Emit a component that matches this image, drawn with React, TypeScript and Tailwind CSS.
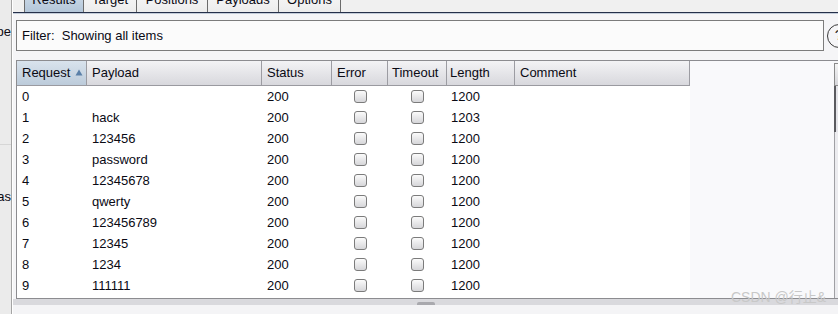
import React from 'react';

const tabs = [
  { name: 'Results', w: 60, active: true },
  { name: 'Target', w: 53 },
  { name: 'Positions', w: 71 },
  { name: 'Payloads', w: 71 },
  { name: 'Options', w: 62 },
];

const cols = [
  { name: 'Request', w: 70, pl: 5, sorted: true },
  { name: 'Payload', w: 175, pl: 5 },
  { name: 'Status', w: 70, pl: 5 },
  { name: 'Error', w: 56, pl: 5 },
  { name: 'Timeout', w: 59, pl: 4 },
  { name: 'Length', w: 68, pl: 3 },
  { name: 'Comment', w: 175, pl: 5 },
];

const rows = [
  ['0', '', '200', '1200'],
  ['1', 'hack', '200', '1203'],
  ['2', '123456', '200', '1200'],
  ['3', 'password', '200', '1200'],
  ['4', '12345678', '200', '1200'],
  ['5', 'qwerty', '200', '1200'],
  ['6', '123456789', '200', '1200'],
  ['7', '12345', '200', '1200'],
  ['8', '1234', '200', '1200'],
  ['9', '111111', '200', '1200'],
];

function Checkbox() {
  return (
    <span className="block w-[13px] h-[13px] rounded-[3px] border border-[#7b7b7b] bg-linear-to-b from-[#fbfbfb] to-[#d6d6d9]" />
  );
}

export default function App() {
  return (
    <div className="relative w-[838px] h-[314px] overflow-hidden flex bg-[#f5f5f7] text-[13px] text-[#0a0a14] font-['Liberation_Sans',Arial,sans-serif]">
      {/* left strip from the neighbouring panel */}
      <div className="w-[12px] shrink-0 flex flex-col bg-[#ebebeb] border-r border-[#a4a4a4] overflow-hidden">
        <div className="h-[24px]" />
        <div className="h-[15px] leading-[15px] flex justify-end whitespace-nowrap">pe</div>
        <div className="h-[106px] border-b border-[#d6d6d6]" />
        <div className="h-[44px]" />
        <div className="h-[15px] leading-[15px] flex justify-end whitespace-nowrap">as</div>
      </div>

      <div className="flex-1 min-w-0 flex flex-col border-l border-white overflow-hidden">
        {/* tabs, cut off at the top */}
        <div className="h-[12px] overflow-hidden bg-[#f0f0f0]">
          <div className="flex ml-[11px] -mt-[12px] h-[24px]">
            {tabs.map((t, i) => (
              <div
                key={t.name}
                style={{ width: t.w }}
                className={`h-[24px] leading-[24px] text-center border-r border-[#6b6b6b] ${i === 0 ? 'border-l' : ''} ${
                  t.active ? 'bg-linear-to-b from-[#d6e1ec] to-[#b3c6d9]' : 'bg-linear-to-b from-[#fafafa] to-[#ececec]'
                }`}
              >
                {t.name}
              </div>
            ))}
          </div>
        </div>
        <div className="h-[1px] bg-[#25304a]" />
        <div className="h-[1px] bg-[#c3ccd9]" />

        {/* filter */}
        <div className="flex items-center mt-[6px] ml-[3px]">
          <div className="w-[808px] h-[31px] shrink-0 border border-[#7c7c7c] bg-[#fbfbfb] flex items-center pl-[5px]">
            Filter:&nbsp; Showing all items
          </div>
          <div className="ml-[3px] w-[11px] h-[24px] shrink-0 overflow-hidden">
            <div className="w-[24px] h-[24px] rounded-full border-[1.5px] border-[#3a3a3a] flex items-center justify-center text-[15px] text-[#333]">
              ?
            </div>
          </div>
        </div>

        {/* results table */}
        <div className="flex mt-[9px] ml-[3px]">
          <div className="w-[818px] h-[239px] shrink-0 border-t border-l border-b border-[#8c8c90] bg-[#f9f9fb] flex flex-col">
            <div className="flex h-[25px] w-[673px] border-b border-[#9a9aa0]">
              {cols.map((c) => (
                <div
                  key={c.name}
                  style={{ width: c.w, paddingLeft: c.pl }}
                  className={`h-[24px] flex items-center whitespace-nowrap overflow-hidden border-r border-[#9c9ca2] ${
                    c.sorted ? 'bg-linear-to-b from-[#d9e3ed] to-[#bccbda]' : 'bg-linear-to-b from-[#f3f3f5] to-[#d8d8dd]'
                  }`}
                >
                  <span>{c.name}</span>
                  {c.sorted && (
                    <svg width="8" height="7" viewBox="0 0 8 7" className="ml-[5px] mb-[1px]">
                      <path d="M4 0.5 L7.5 6.5 L0.5 6.5 Z" fill="#5b80a8" />
                    </svg>
                  )}
                </div>
              ))}
            </div>
            <div className="w-[673px] bg-white">
              {rows.map((r) => (
                <div key={r[0]} className="flex h-[21px] items-center">
                  <div style={{ width: 70 }} className="pl-[5px]">{r[0]}</div>
                  <div style={{ width: 175 }} className="pl-[5px]">{r[1]}</div>
                  <div style={{ width: 70 }} className="pl-[5px]">{r[2]}</div>
                  <div style={{ width: 56 }} className="flex justify-center"><Checkbox /></div>
                  <div style={{ width: 59 }} className="flex justify-center"><Checkbox /></div>
                  <div style={{ width: 68 }} className="pl-[4px]">{r[3]}</div>
                  <div style={{ width: 175 }} />
                </div>
              ))}
            </div>
            <div className="w-[673px] flex-1 bg-white" />
          </div>
          {/* vertical scrollbar edge */}
          <div className="w-[6px] h-[239px] shrink-0 border-t border-b border-[#8c8c90] flex flex-col">
            <div className="h-[2px]" />
            <div className="h-[23px] border-l border-t border-b border-[#8a8a8a] bg-linear-to-b from-[#f4f4f4] to-[#d6d6da]" />
            <div className="h-[46px] border-l-2 border-[#5a5a5e] bg-[#e4e4e8]" />
            <div className="flex-1 border-l border-[#a0a0a4] bg-[#ececef]" />
          </div>
        </div>

        {/* splitter */}
        <div className="h-[6px] bg-[#d9d9dd] flex justify-center items-end">
          <div className="w-[18px] h-[3px] rounded-t-[2px] bg-[#a9a9ae]" />
        </div>
        <div className="flex-1 bg-[#f4f4f6]" />
      </div>

      <div className="absolute left-[731px] top-[289px] text-[14px] leading-[17px] text-[#c8c8c8] font-['Liberation_Sans','Noto_Sans_CJK_SC',sans-serif] whitespace-nowrap">
        CSDN @行止&amp;
      </div>
    </div>
  );
}
